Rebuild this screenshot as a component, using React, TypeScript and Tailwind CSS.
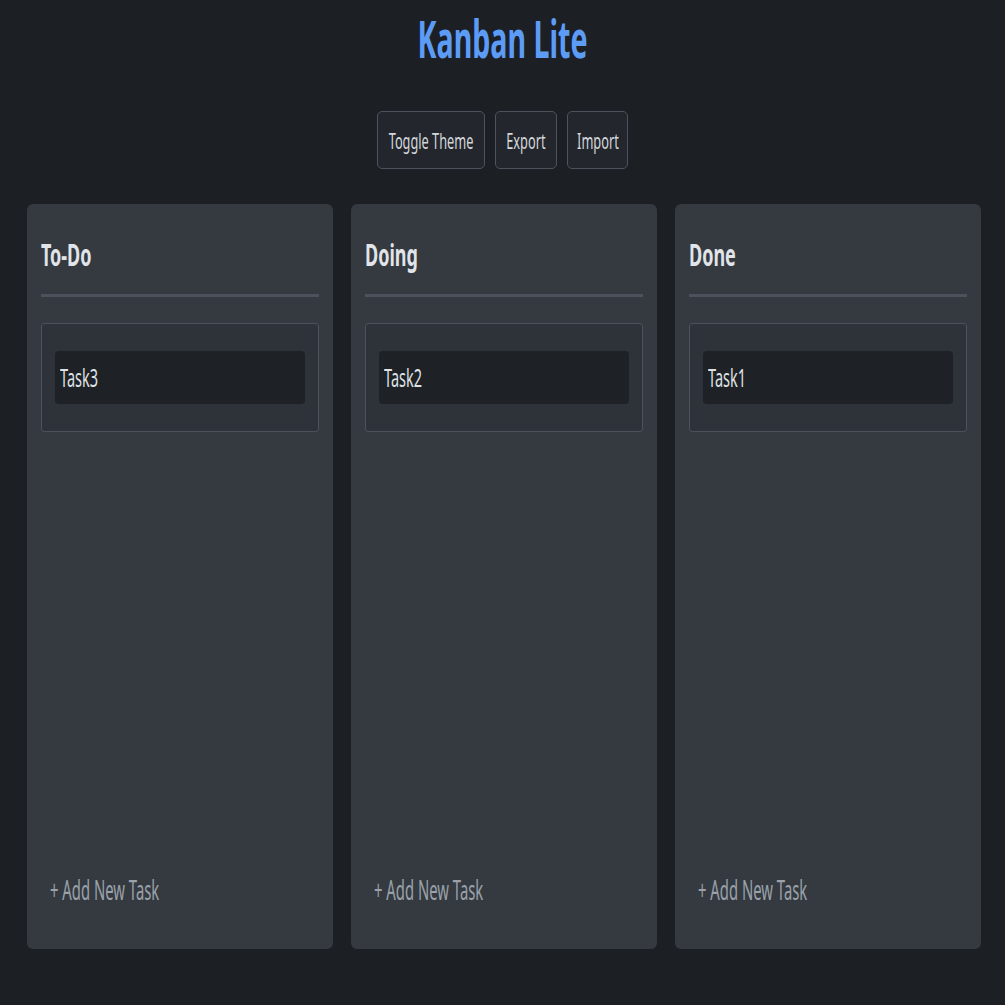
const COLUMNS = [
  { title: 'To-Do', tasks: ['Task3'] },
  { title: 'Doing', tasks: ['Task2'] },
  { title: 'Done', tasks: ['Task1'] },
]

const BUTTONS = [
  { label: 'Toggle Theme', width: 'w-[108px]' },
  { label: 'Export', width: 'w-[62px]' },
  { label: 'Import', width: 'w-[61px]' },
]

// the screenshot's text is narrow, so glyphs are squeezed horizontally
const NARROW = 'inline-block whitespace-nowrap scale-x-[0.58]'

function Column({ title, tasks }: { title: string; tasks: string[] }) {
  return (
    <div className="flex flex-col bg-[#343a40] rounded-[6px] px-[14px] pt-[14px] pb-[45px]">
      <h2 className="text-[#e1e4e8] font-bold text-[31px] leading-[36px] pt-[18px] pb-[22px] border-b-[3px] border-[#4b525c]">
        <span className={`${NARROW} origin-left`}>{title}</span>
      </h2>
      <div className="mt-[26px] border border-[#4b525c] bg-[#2e3339] rounded-[3px] px-[13px] py-[27px]">
        {tasks.map(t => (
          <div key={t} className="bg-[#1e2125] rounded-[4px] h-[53px] flex items-center px-[5px] text-[25px] text-[#dfe2e6]">
            <span className={`${NARROW} origin-left`}>{t}</span>
          </div>
        ))}
      </div>
      <div className="flex-1" />
      <button className="self-start ml-[9px] text-[28px] leading-[30px] text-[#9aa1aa]">
        <span className="inline-block whitespace-nowrap origin-left scale-x-[0.53]">+ Add New Task</span>
      </button>
    </div>
  )
}

export default function App() {
  return (
    <div className="min-h-[1005px] bg-[#1c1f24] font-['Noto_Sans','Open_Sans',sans-serif]">
      <h1 className="text-center text-[#5c9cf6] font-bold text-[52px] leading-[60px] pt-[8px] pb-[2px]">
        <span className="inline-block whitespace-nowrap origin-center scale-x-[0.55]">Kanban Lite</span>
      </h1>
      <div className="flex justify-center gap-[10px] mt-[41px]">
        {BUTTONS.map(b => (
          <button
            key={b.label}
            className={`${b.width} h-[58px] flex items-center justify-center bg-[#23272d] border border-[#4d535c] rounded-[5px] text-[22px] text-[#d4d7dc]`}
          >
            <span className={`${NARROW} origin-center`}>{b.label}</span>
          </button>
        ))}
      </div>
      <div className="grid grid-cols-3 gap-[18px] pl-[27px] pr-[24px] pt-[35px] pb-[55px] h-[835px] box-border">
        {COLUMNS.map(c => (
          <Column key={c.title} {...c} />
        ))}
      </div>
    </div>
  )
}
